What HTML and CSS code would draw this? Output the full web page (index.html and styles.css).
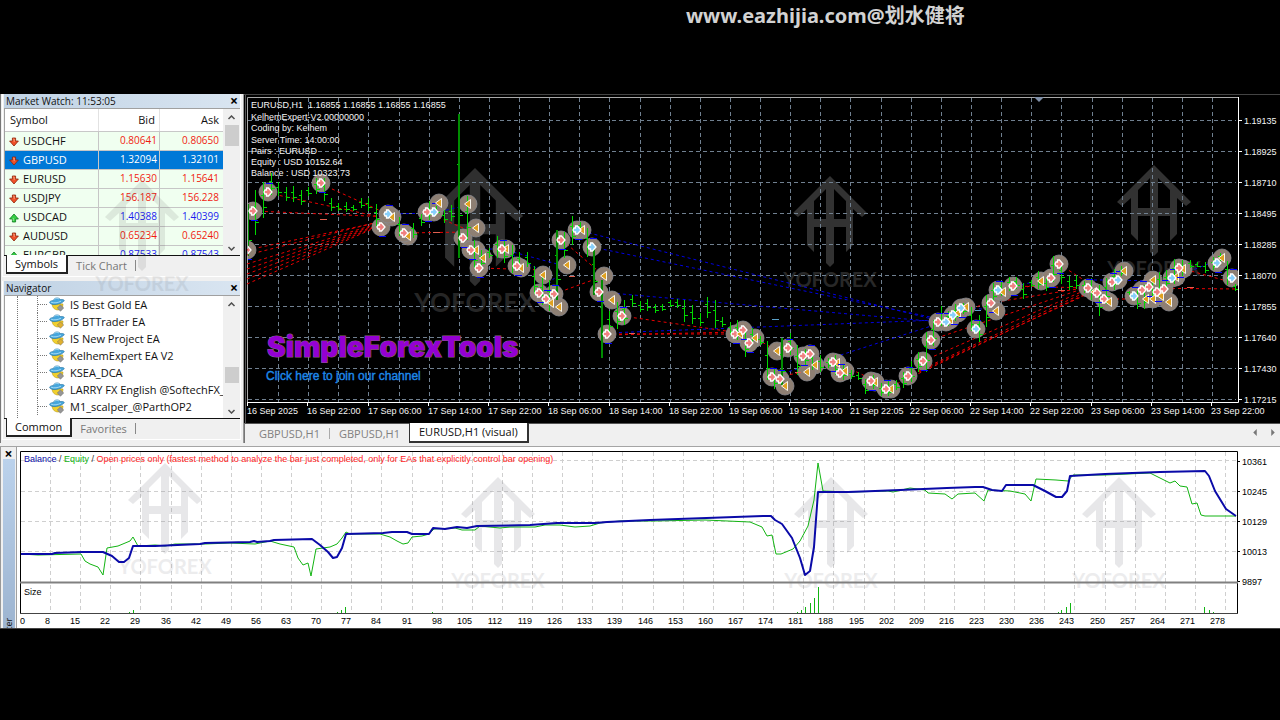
FILE: index.html
```html
<!DOCTYPE html>
<html lang="en">
<head>
<meta charset="utf-8">
<title>Strategy Tester</title>
<link rel="stylesheet" href="styles.css">
</head>
<body>
<svg class="defs" aria-hidden="true">
  <symbol id="down" viewBox="0 0 10 10"><path d="M3.4 1h3.2v3h2.8L5 9 .6 4h2.8z" fill="#f0512a" stroke="#8c2208" stroke-width=".8"/><path d="M4.2 2h1v3" stroke="#ffb08a" fill="none" stroke-width=".8"/></symbol>
  <symbol id="up" viewBox="0 0 10 10"><path d="M3.4 9h3.2V6h2.8L5 1 .6 6h2.8z" fill="#35cf45" stroke="#0c7a1c" stroke-width=".8"/><path d="M4.2 8V5" stroke="#a5f5a5" fill="none" stroke-width=".8"/></symbol>
  <symbol id="ea" viewBox="0 0 16 15">
    <path d="M3 6c0 5 3 7 6 7s5-2 5-6z" fill="#f2d02c" stroke="#a98a12" stroke-width=".5"/>
    <path d="M.6 5.6C2 9 12 8 15.400 3.600 14.500 2 12 2.500 11.200 2.600 10.500.3 5 .2 4.600 3.400 2.500 3.500.6 4.300.6 5.600z" fill="#46a6dc" stroke="#1f6f9f" stroke-width=".6"/>
    <path d="M5.500 2.500c1-1.400 3.500-1.500 4.500-.5M2 5.200c3 1.200 7 .6 10-1" stroke="#b5e4fb" stroke-width=".8" fill="none"/>
    <path d="M11.500 7.800l3.200 3.200-3.200 3.200L8.300 11z" fill="currentColor" stroke="#6c6c6c" stroke-width=".5"/>
  </symbol>
  <symbol id="mark" viewBox="-48 0 96 114" overflow="visible">
    <path fill-rule="evenodd" d="M0 0L37 37 32 41 23 33V69L16 76V51H4V87L0 91-4 87V51H-16V76L-23 69V33L-32 41-37 37ZM-16 25V43H-4V13ZM16 25V43H4V13Z"/>
    <text x="0" y="111" text-anchor="middle" class="mark-text">YOFOREX</text>
  </symbol>
</svg>

<header class="caption">www.eazhijia.com@划水健将</header>

<main class="app">
  <div class="workspace">
    <aside class="side">
      <section class="panel">
        <div class="bar"><h2>Market Watch: 11:53:05</h2><button class="close" aria-label="Close Market Watch">×</button></div>
        <div class="list watch">
          <table class="quotes">
            <thead><tr><th>Symbol</th><th>Bid</th><th>Ask</th></tr></thead>
            <tbody>
              <tr class="fall"><td><svg class="arrow"><use href="#down"/></svg>USDCHF</td><td>0.80641</td><td>0.80650</td></tr>
              <tr class="picked"><td><svg class="arrow"><use href="#down"/></svg>GBPUSD</td><td>1.32094</td><td>1.32101</td></tr>
              <tr class="fall"><td><svg class="arrow"><use href="#down"/></svg>EURUSD</td><td>1.15630</td><td>1.15641</td></tr>
              <tr class="fall"><td><svg class="arrow"><use href="#down"/></svg>USDJPY</td><td>156.187</td><td>156.228</td></tr>
              <tr class="rise"><td><svg class="arrow"><use href="#up"/></svg>USDCAD</td><td>1.40388</td><td>1.40399</td></tr>
              <tr class="fall"><td><svg class="arrow"><use href="#down"/></svg>AUDUSD</td><td>0.65234</td><td>0.65240</td></tr>
              <tr class="rise"><td><svg class="arrow"><use href="#up"/></svg>EURGBP</td><td>0.87533</td><td>0.87543</td></tr>
            </tbody>
          </table>
          <div class="scroll"><svg viewBox="0 0 8 5"><path d="M1 4l3-3 3 3"/></svg><i class="thumb high"></i><svg viewBox="0 0 8 5"><path d="M1 1l3 3 3-3"/></svg></div>
        </div>
        <nav class="tabs"><button class="tab on">Symbols</button><button class="tab">Tick Chart</button><span class="sep"></span></nav>
      </section>
      <section class="panel">
        <div class="bar"><h2>Navigator</h2><button class="close" aria-label="Close Navigator">×</button></div>
        <div class="list tree">
          <ul class="experts">
            <li><svg class="ea"><use href="#ea"/></svg>IS Best Gold EA</li>
            <li><svg class="ea gold"><use href="#ea"/></svg>IS BTTrader EA</li>
            <li><svg class="ea gold"><use href="#ea"/></svg>IS New Project EA</li>
            <li><svg class="ea"><use href="#ea"/></svg>KelhemExpert EA V2</li>
            <li><svg class="ea"><use href="#ea"/></svg>KSEA_DCA</li>
            <li><svg class="ea"><use href="#ea"/></svg>LARRY FX English @SoftechFX_</li>
            <li><svg class="ea"><use href="#ea"/></svg>M1_scalper_@ParthOP2</li>
          </ul>
          <div class="scroll"><svg viewBox="0 0 8 5"><path d="M1 4l3-3 3 3"/></svg><i class="thumb low"></i><svg viewBox="0 0 8 5"><path d="M1 1l3 3 3-3"/></svg></div>
        </div>
        <nav class="tabs"><button class="tab on">Common</button><button class="tab">Favorites</button><span class="sep"></span></nav>
      </section>
      <svg class="side-mark" aria-hidden="true"><use href="#mark"/></svg>
    </aside>
    <section class="charts">
      <svg id="price" class="price" viewBox="244 94 1036 329" role="img" aria-label="EURUSD H1 chart"></svg>
      <nav class="chart-tabs">
        <button class="ctab">GBPUSD,H1</button><span class="sep"></span><button class="ctab">GBPUSD,H1</button><button class="ctab on">EURUSD,H1 (visual)</button>
        <span class="pager"><button aria-label="Previous tab"><svg viewBox="0 0 4 8"><path d="M4 0v8L0 4z"/></svg></button><button aria-label="Next tab"><svg viewBox="0 0 4 8"><path d="M0 0v8l4-4z"/></svg></button></span>
      </nav>
    </section>
  </div>
  <section class="tester">
    <div class="rail"><button class="close" aria-label="Close Tester">×</button><div class="strip">Tester</div></div>
    <svg id="graph" class="graph" viewBox="16 447 1264 181" role="img" aria-label="Balance and equity graph"></svg>
  </section>
</main>
<script src="app.js"></script>
</body>
</html>
```
FILE: styles.css
```css
* { box-sizing: border-box; }
body { margin: 0; min-height: 100vh; background: #000; font-family: "Open Sans", "Noto Sans", sans-serif; font-size: 11px; color: #111; }
button { font: inherit; color: inherit; background: none; border: 0; padding: 0; margin: 0; }
.defs { position: absolute; width: 0; height: 0; }
.caption { height: 94px; padding: 2px 0 0 686px; font: bold 20px/28px "Noto Sans", "Noto Sans CJK SC", sans-serif; color: #d2d2d2; white-space: nowrap; }
.app { background: #f0f0f0; border-bottom: 1px solid #444; }
.workspace { display: grid; grid-template-columns: 244px minmax(0, 1fr); padding-bottom: 3px; border-bottom: 1px solid #a5a5a5; }
.side { position: relative; padding: 0 2px 1px 1px; display: flex; flex-direction: column; gap: 4px; border-left: 1px solid #777; border-right: 1px solid #999; }
.panel { padding: 0 0 2px 1px; border: 1px solid #fff; border-top: 0; }
.bar { display: flex; align-items: center; justify-content: space-between; height: 14px; padding: 0 2px 0 2px; background: linear-gradient(90deg, #c0d2e4, #d9e5f1); }
.bar h2 { margin: 0; font: 10px/14px "Open Sans", sans-serif; }
.close { font: bold 14px/12px "Open Sans", sans-serif; color: #000; }
.list { display: flex; background: #fff; border: 1px solid #a0a0a0; border-width: 1px 0 0 1px; overflow: hidden; }
.watch { height: 147px; }
.tree { height: 123px; }
.quotes { flex: 1; border-collapse: collapse; table-layout: fixed; height: 156px; }
.quotes th { height: 22px; padding: 0 4px; font-weight: normal; text-align: right; background: #fff; border-right: 1px solid #e2e2e2; border-bottom: 1px solid #c8c8c8; }
.quotes th:first-child { width: 93px; text-align: left; padding-left: 5px; }
.quotes td { height: 19px; padding: 0 2px; line-height: 17px; background: #f0fff0; border-right: 1px solid #c6c6c6; border-bottom: 1px solid #c6c6c6; text-align: right; font-size: 10px; }
.quotes th:last-child, .quotes td:last-child { border-right: 0; padding-right: 4px; }
.quotes td:first-child { text-align: left; padding-left: 4px; color: #111; font-size: 11px; white-space: nowrap; }
.arrow { width: 10px; height: 10px; margin-right: 4px; vertical-align: -2px; }
.fall td { color: #f01c10; }
.rise td { color: #1c1cf0; }
.quotes .picked td, .quotes .picked td:first-child { background: #0078d7; color: #fff; }
.scroll { width: 17px; flex: none; display: flex; flex-direction: column; align-items: center; padding: 6px 0 4px; background: #f0f0f0; }
.scroll svg { width: 9px; height: 5px; fill: none; stroke: #505050; stroke-width: 1.5; }
.thumb { width: 14px; background: #cdcdcd; }
.thumb.high { height: 21px; margin: 5px 0 auto; }
.thumb.low { height: 16px; margin: auto 0 26px; }
.tabs { display: flex; height: 19px; border-top: 1px solid #111; }
.tab { padding: 0 8px; line-height: 17px; color: #777; }
.tab.on { background: #fff; color: #111; border: 1px solid #222; border-width: 0 2px 2px 1px; margin: -1px 0 0 2px; }
.sep { width: 1px; height: 11px; margin-top: 4px; background: #888; }
.experts { flex: 1; min-width: 0; margin: 0 0 0 12px; padding: 0; list-style: none; border-left: 1px dotted #777; overflow: hidden; }
.experts li { display: flex; align-items: center; height: 17px; margin-left: 19px; border-left: 1px dotted #777; white-space: nowrap; font-size: 11px; }
.experts li::before { content: ""; flex: none; width: 9px; margin-right: 2px; border-top: 1px dotted #777; }
.ea { flex: none; width: 16px; height: 15px; margin-right: 5px; color: #969696; }
.gold { color: #e0b030; }
.side-mark { position: absolute; left: 93px; top: 86px; width: 96px; height: 114px; overflow: visible; opacity: .1; fill: #333; pointer-events: none; }
.charts { min-width: 0; display: flex; flex-direction: column; }
.price { display: block; width: 100%; height: auto; background: #000; }
.chart-tabs { display: flex; height: 20px; border-top: 1px solid #555; border-left: 1px solid #777; padding-left: 5px; }
.ctab { padding: 0 9px; line-height: 18px; color: #808080; }
.chart-tabs .sep { background: #aaa; }
.ctab.on { background: #fff; color: #111; border: 1px solid #333; border-width: 0 2px 2px 1px; margin-top: -1px; }
.pager { display: flex; gap: 14px; margin-left: auto; padding: 0 5px 2px 0; align-items: center; }
.pager button { display: flex; }
.pager svg { width: 4px; height: 7px; fill: #777; }
.tester { display: flex; background: #fff; }
.rail { width: 16px; flex: none; display: flex; flex-direction: column; align-items: center; background: #f0f0f0; border-left: 1px solid #999; }
.rail .close { width: 12px; height: 12px; line-height: 9px; }
.strip { flex: 1; width: 12px; background: linear-gradient(#9db4d0, #bbd2ec); writing-mode: vertical-rl; transform: rotate(180deg); line-height: 12px; font-size: 9px; overflow: hidden; height: 0; text-indent: -16px; }
.graph { flex: 1; min-width: 0; display: block; background: #fff; }
.mark-text { font: bold 20px Lato, sans-serif; opacity: .8; }
.axis { font: 9px "Liberation Sans", sans-serif; }
.light { fill: #f4f4f4; }
.brand { font: 900 28px Inter, sans-serif; fill: #9400d3; stroke: #8a6a70; stroke-width: 1; paint-order: stroke; }
.join { font: 12px "Liberation Sans", sans-serif; fill: #1e88ea; stroke: #1e88ea; stroke-width: .4; }
```
FILE: app.js
```
const el = (parent, name, attrs, text) => {
  const node = document.createElementNS("http://www.w3.org/2000/svg", name);
  for (const key in attrs) node.setAttribute(key, attrs[key]);
  if (text) node.textContent = text;
  parent.appendChild(node);
  return node;
};
const path = (svg, d, stroke, width = 1, extra = {}) =>
  el(svg, "path", { d, stroke, "stroke-width": width, fill: "none", ...extra });
const mark = (svg, x, y, scale, fill, opacity) =>
  el(svg, "use", { href: "#mark", x: x - 48 * scale, y, width: 96 * scale, height: 114 * scale, fill, opacity });
const label = (svg, x, y, text, cls = "axis", attrs = {}) => el(svg, "text", { x, y, class: cls, ...attrs }, text);

/* Price chart */
const price = document.getElementById("price");
path(price, "M244 94.500H1280", "#444");
path(price, "M245.500 95V423", "#555");
mark(price, 475, 168, 1.3, "#777", 0.4);
mark(price, 830, 176, 1, "#777", 0.42);
mark(price, 1154, 165, 1, "#777", 0.42);

let grid = "";
for (let i = 0; i < 32; i++) grid += `M${Math.round(278 + i * 30.13) + 0.5} 98V402`;
for (let i = 0; i < 10; i++) grid += `M248 ${120.5 + i * 31}H1236`;
path(price, grid, "#708090", 1, { "stroke-dasharray": "4 3" });
path(price, "M247.500 402V97.500H1238.500", "#a9a9a9");
path(price, "M247 402.500H1238.500V97", "#fff");
["1.19135", "1.18925", "1.18710", "1.18495", "1.18285", "1.18070", "1.17855", "1.17640", "1.17430", "1.17215"].forEach((t, i) => {
  path(price, `M1239 ${120.5 + i * 31}h3`, "#fff");
  label(price, 1244, 124 + i * 31, t, "axis light");
});
["16 Sep 2025", "16 Sep 22:00", "17 Sep 06:00", "17 Sep 14:00", "17 Sep 22:00", "18 Sep 06:00", "18 Sep 14:00", "18 Sep 22:00", "19 Sep 06:00", "19 Sep 14:00", "21 Sep 22:05", "22 Sep 06:00", "22 Sep 14:00", "22 Sep 22:00", "23 Sep 06:00", "23 Sep 14:00", "23 Sep 22:00"].forEach((t, i) => {
  const x = Math.round(247 + i * 60.26);
  path(price, `M${x + 0.5} 403v3`, "#fff");
  label(price, x, 414, t, "axis light");
});
el(price, "path", { d: "M1034 97h10l-5 5z", fill: "#8090a8" });

/* Trade lines: x1, y1, x2, y2 */
const losses = [
  [247, 250, 385, 221], [247, 255, 386, 220], [247, 264, 386, 221], [247, 269, 385, 222], [247, 274, 386, 222], [247, 279, 385, 223], [247, 284, 386, 223],
  [253, 211, 392, 217], [268, 193, 385, 218], [321, 184, 392, 216], [404, 233, 468, 232], [427, 213, 468, 230], [479, 268, 543, 270],
  [562, 240, 604, 276], [554, 294, 604, 276], [622, 316, 740, 333], [607, 334, 740, 334], [607, 335, 737, 332], [742, 330, 777, 351],
  [787, 348, 815, 365], [772, 377, 807, 372], [840, 364, 890, 388], [886, 389, 1090, 292], [908, 376, 1090, 290], [908, 377, 1092, 292],
  [923, 361, 1088, 289], [931, 340, 1088, 287], [938, 322, 1040, 282], [990, 303, 1090, 287], [1059, 264, 1090, 284], [1013, 286, 1088, 288],
  [1104, 299, 1165, 299], [1180, 268, 1234, 283], [1130, 288, 1238, 289]
];
const wins = [
  [388, 214, 439, 213], [434, 213, 468, 205], [471, 249, 506, 249], [502, 249, 557, 264], [502, 249, 543, 272], [577, 230, 940, 321], [592, 247, 940, 319],
  [599, 292, 940, 322], [607, 333, 938, 320], [772, 377, 950, 320], [961, 308, 1003, 310], [998, 290, 1051, 278], [1110, 280, 1155, 281], [1172, 278, 1221, 259],
  [1088, 280, 1118, 280], [540, 293, 568, 264]
];
const lines = list => list.map(([a, b, c, d]) => `M${a} ${b}L${c} ${d}`).join("");
path(price, lines(losses), "#e80000", 1, { "stroke-dasharray": "3 3" });
path(price, lines(wins), "#0000e0", 1, { "stroke-dasharray": "3 3" });

/* Trade markers: x, y, kind */
const trades = [
  [247, 250, "r"], [253, 211, "r"], [268, 192, "r"], [321, 183, "r"], [381, 227, "r"], [392, 217, "y"], [388, 214, "b"], [408, 236, "y"], [404, 233, "r"],
  [427, 212, "r"], [434, 212, "b"], [439, 203, "y"], [468, 204, "y"], [463, 238, "r"], [476, 228, "y"], [476, 250, "y"], [471, 250, "r"], [483, 258, "y"], [479, 268, "r"],
  [506, 249, "y"], [502, 249, "r"], [521, 268, "y"], [517, 266, "r"], [543, 275, "y"], [539, 293, "r"], [554, 294, "r"], [551, 303, "y"], [546, 299, "r"], [559, 307, "y"],
  [561, 240, "r"], [567, 265, "y"], [582, 230, "y"], [577, 230, "b"], [592, 247, "b"], [604, 276, "y"], [599, 292, "r"], [612, 300, "y"], [622, 316, "r"], [607, 334, "r"],
  [735, 334, "r"], [740, 334, "y"], [743, 330, "r"], [755, 338, "y"], [749, 343, "r"], [777, 351, "y"], [788, 348, "r"], [803, 356, "r"], [810, 354, "r"], [815, 365, "y"], [807, 372, "y"],
  [772, 377, "r"], [780, 379, "r"], [785, 386, "y"], [837, 363, "y"], [833, 362, "r"], [845, 371, "y"], [840, 373, "r"], [875, 382, "y"], [871, 381, "r"], [891, 389, "y"], [886, 389, "r"],
  [908, 376, "r"], [923, 361, "r"], [931, 340, "r"], [938, 322, "r"], [950, 320, "y"], [946, 322, "b"], [958, 313, "y"], [953, 315, "b"], [966, 307, "y"], [961, 308, "b"], [976, 329, "b"],
  [991, 303, "r"], [996, 311, "y"], [1003, 292, "y"], [998, 290, "b"], [1013, 286, "r"], [1041, 281, "y"], [1051, 278, "r"], [1059, 264, "r"], [1088, 288, "r"], [1094, 292, "y"], [1097, 293, "r"],
  [1104, 299, "r"], [1109, 302, "y"], [1112, 282, "r"], [1118, 280, "b"], [1124, 271, "y"], [1134, 296, "b"], [1142, 290, "r"], [1146, 299, "y"], [1149, 287, "r"], [1153, 280, "y"], [1153, 299, "y"],
  [1161, 296, "y"], [1157, 292, "r"], [1164, 289, "r"], [1169, 302, "y"], [1176, 277, "y"], [1172, 278, "b"], [1183, 269, "y"], [1179, 268, "r"], [1217, 263, "b"], [1222, 258, "y"], [1232, 278, "b"]
];
const clip = el(el(price, "defs", {}), "clipPath", { id: "plot" });
el(clip, "rect", { x: 248, y: 98, width: 990, height: 304 });
const layer = el(price, "g", { "clip-path": "url(#plot)" });
trades.forEach(([x, y]) => el(layer, "circle", { cx: x, cy: y, r: 9, fill: "#8e7f73", stroke: "#8a8a90", "stroke-width": 0.8 }));

/* Bars: x, high, low */
const bars = [
  [248, 204, 256], [255, 190, 235], [263, 182, 218], [271, 173, 195], [278, 182, 196], [286, 187, 201], [293, 186, 202], [301, 190, 205], [308, 187, 196], [316, 178, 194], [324, 178, 201], [331, 198, 211], [338, 203, 211], [346, 202, 212], [353, 205, 211], [361, 198, 208], [368, 198, 211], [376, 204, 226],
  [399, 217, 236], [413, 223, 238], [421, 214, 226], [429, 201, 220], [436, 206, 215], [444, 210, 223], [451, 205, 221], [459, 114, 258], [467, 196, 240], [474, 240, 268], [481, 250, 268], [489, 248, 258], [497, 236, 258], [504, 240, 263], [512, 245, 273], [519, 252, 270], [527, 252, 267], [534, 266, 294], [542, 277, 305], [549, 280, 311], [557, 230, 300], [564, 232, 258], [572, 216, 245], [580, 222, 230], [587, 228, 257], [594, 247, 295], [602, 280, 358], [609, 311, 333], [617, 302, 329],
  [624, 300, 325], [632, 295, 307], [640, 301, 312], [647, 299, 311], [655, 304, 313], [662, 304, 311], [670, 300, 307], [677, 299, 308], [684, 300, 322], [692, 305, 324], [700, 313, 326], [707, 297, 318], [715, 300, 328], [722, 317, 327], [730, 322, 335], [737, 320, 340], [745, 330, 357], [752, 328, 344], [760, 336, 345], [767, 341, 380], [774, 369, 389], [782, 338, 385], [790, 333, 355], [797, 345, 375], [805, 349, 365], [812, 352, 370], [820, 355, 372], [828, 358, 368], [835, 355, 375], [843, 364, 380], [851, 370, 379], [858, 372, 380], [865, 379, 394], [873, 375, 389], [881, 383, 396], [888, 381, 396], [896, 380, 390], [903, 372, 388], [911, 361, 382], [918, 352, 372], [926, 332, 372], [933, 320, 346], [941, 306, 326], [948, 311, 326], [955, 304, 321], [963, 303, 314], [971, 307, 331], [979, 315, 342], [986, 295, 327], [993, 283, 302], [1001, 281, 296], [1009, 277, 291], [1016, 277, 289], [1023, 283, 299], [1031, 280, 287], [1038, 271, 289], [1046, 278, 291], [1053, 256, 282], [1061, 262, 284], [1069, 276, 290], [1076, 275, 289], [1084, 281, 293], [1091, 278, 300], [1099, 285, 316], [1106, 278, 304], [1114, 269, 290], [1121, 266, 276], [1129, 291, 295], [1137, 290, 309], [1144, 285, 309], [1152, 278, 301], [1159, 272, 293], [1166, 270, 289], [1174, 259, 284], [1182, 260, 276], [1190, 260, 268], [1197, 262, 267], [1205, 262, 273], [1213, 257, 270], [1220, 253, 261], [1227, 261, 285], [1235, 284, 291]
];
path(layer, bars.map(([x, a, b]) => `M${x + 0.5} ${a}V${b}M${x - 2} ${Math.round(a + (b - a) * 0.35) + 0.5}h2M${x + 1} ${Math.round(b - (b - a) * 0.3) + 0.5}h3`).join(""), "#00d800");
path(layer, bars.filter(([, a, b]) => b - a > 45).map(([x, a, b]) => `M${x} ${a}V${b}`).join(""), "#008c00", 2);
trades.forEach(([x, y, kind]) => {
  if (kind === "y") {
    el(layer, "path", { d: `M${x + 2.5} ${y - 4.5}v9l-6-4.500z`, fill: "#e0a020", stroke: "#fff", "stroke-width": 0.9 });
  } else {
    el(layer, "path", { d: `M${x - 3} ${y - 2}h1.500v-2h2l3.500 4-3.500 4h-2v-2h-1.500l-1-2z`, fill: kind === "r" ? "#f08080" : "#87cefa", stroke: "#fff", "stroke-width": 1.3 });
    el(layer, "path", { d: `M${x - 2} ${y + (x % 2 ? 9.5 : -8.5)}h7`, stroke: "#0000ff" });
  }
});
path(price, "M320 219.500h7M569 276.500h6M629 333.500h6M795 372.500h6M1058 290.500h7M1187 287.500h7M433 232.500h7", "#e06050");
path(price, "M772 319.500h7M975 310.500h6", "#5aa0c8");
label(price, 251, 108, "EURUSD,H1  1.16855 1.16855 1.16855 1.16855", "axis light", { style: "white-space:pre" });
["KelhemExpert-V2.00000000", "Coding by: Kelhem", "Server Time: 14:00:00", "Pairs : EURUSD", "Equity : USD 10152.64", "Balance : USD 10323.73"].forEach((t, i) =>
  label(price, 251, [120, 131, 143, 154, 165, 176][i], t, "axis light"));
label(price, 267, 357, "SimpleForexTools", "brand");
label(price, 266, 380, "Click here to join our channel", "join");

/* Tester graph */
const graph = document.getElementById("graph");
path(graph, "M16.500 628V447", "#a0a0a0");
let cells = "";
for (let i = 0; i < 40; i++) cells += `M${Math.round(50 + i * 30.13) + 0.5} 452V613`;
for (const y of [460.5, 491.5, 521.5, 551.5]) cells += `M21 ${y}H1237`;
path(graph, cells, "#cfcfcf", 1, { "stroke-dasharray": "4 3" });
[[165, 463], [498, 477], [831, 477], [1119, 477]].forEach(([x, y]) => mark(graph, x, y, 1, "#8c8c94", 0.2));
const curve = (points, color, width) => el(graph, "polyline", { points, fill: "none", stroke: color, "stroke-width": width, "stroke-linejoin": "round" });
curve("21,554 38,555 81,554 85,561 90,564 98,567 103,575 107,548 118,546 130,541 133,537 138,546 155,545 165,546 175,544 205,544 230,543 255,544 270,541 280,544 294,547 298,558 303,565 308,563 311,576 316,549 330,547 337,544 342,538 346,532 350,534 380,534 390,537 397,541 403,544 408,543 412,537 422,536 429,534 434,529 455,528 462,530 475,530 480,526 490,527 500,528 510,527 535,527 545,525 560,525 575,527 590,526 600,523 620,521 655,521 705,520 750,522 762,527 767,536 772,535 776,554 781,554 793,549 800,541 808,526 814,500 818,463 823,491 850,492 888,491 893,492 910,488 925,490 928,493 945,494 952,499 958,494 975,493 984,501 988,490 1010,491 1025,494 1031,501 1036,479 1056,480 1068,481 1073,475 1105,475 1150,473 1170,483 1175,481 1180,486 1187,487 1192,504 1197,503 1201,515 1205,516 1236,516", "#12b412", 1);
curve("21,554 52,554 55,553 82,552 103,552 112,556 119,562 124,562 129,558 133,546 155,546 200,544 205,543 250,542 254,541 257,542 270,541 274,540 312,539 320,545 328,552 333,558 337,557 342,548 346,534 383,533 392,532 407,532 412,534 429,534 433,528 445,529 457,527 467,528 477,526 530,525 557,523 595,523 607,522 650,520 763,516 771,516 775,520 782,524 792,538 800,558 805,575 810,571 814,547 818,492 848,492 875,491 900,490 947,488 975,487 983,487 992,490 1002,491 1006,485 1033,485 1045,491 1056,497 1062,497 1067,491 1070,476 1105,474 1160,472 1205,471 1209,476 1215,491 1226,509 1236,516", "#0a0aa8", 2);
path(graph, "M129.500 612v1M133.500 610v3M337.500 612v1M341.500 610v3M345.500 607v6M797.500 612v1M801.500 610v3M805.500 607v6M810.500 603v10M814.500 598v15M818.500 587v26M1058.500 612v1M1061.500 610v3M1066.500 607v6M1070.500 603v10M1204.500 607v6M1209.500 610v3M1213.500 612v1M432.500 612v1", "#12b412");
path(graph, "M20.500 613.500V451.500H1237.500V613.500", "#000");
path(graph, "M20 582.500H1238", "#808080", 2);
path(graph, "M20 613.500H1238", "#444");
["10361", "10245", "10129", "10013", "9897"].forEach((t, i) => {
  path(graph, `M1238 ${461.5 + i * 30}h2`, "#000");
  label(graph, 1242, 465 + i * 30, t);
});
label(graph, 25, 624, "0", "axis", { "text-anchor": "end" });
["8", "15", "22", "29", "36", "42", "49", "56", "63", "70", "77", "84", "91", "98", "105", "112", "119", "126", "133", "139", "146", "153", "160", "167", "174", "181", "188", "195", "202", "209", "216", "223", "230", "236", "243", "250", "257", "264", "271", "278"].forEach((t, i) =>
  label(graph, Math.round(50 + i * 30.13), 624, t, "axis", { "text-anchor": "end" }));
const legend = label(graph, 24, 462, "");
[["Balance", "#0a0aa8"], [" / ", "#333"], ["Equity", "#12b412"], [" / ", "#333"], ["Open prices only (fastest method to analyze the bar just completed, only for EAs that explicitly control bar opening)", "#ff1e1e"]].forEach(([t, fill]) =>
  el(legend, "tspan", { fill }, t));
label(graph, 24, 595, "Size");
```
